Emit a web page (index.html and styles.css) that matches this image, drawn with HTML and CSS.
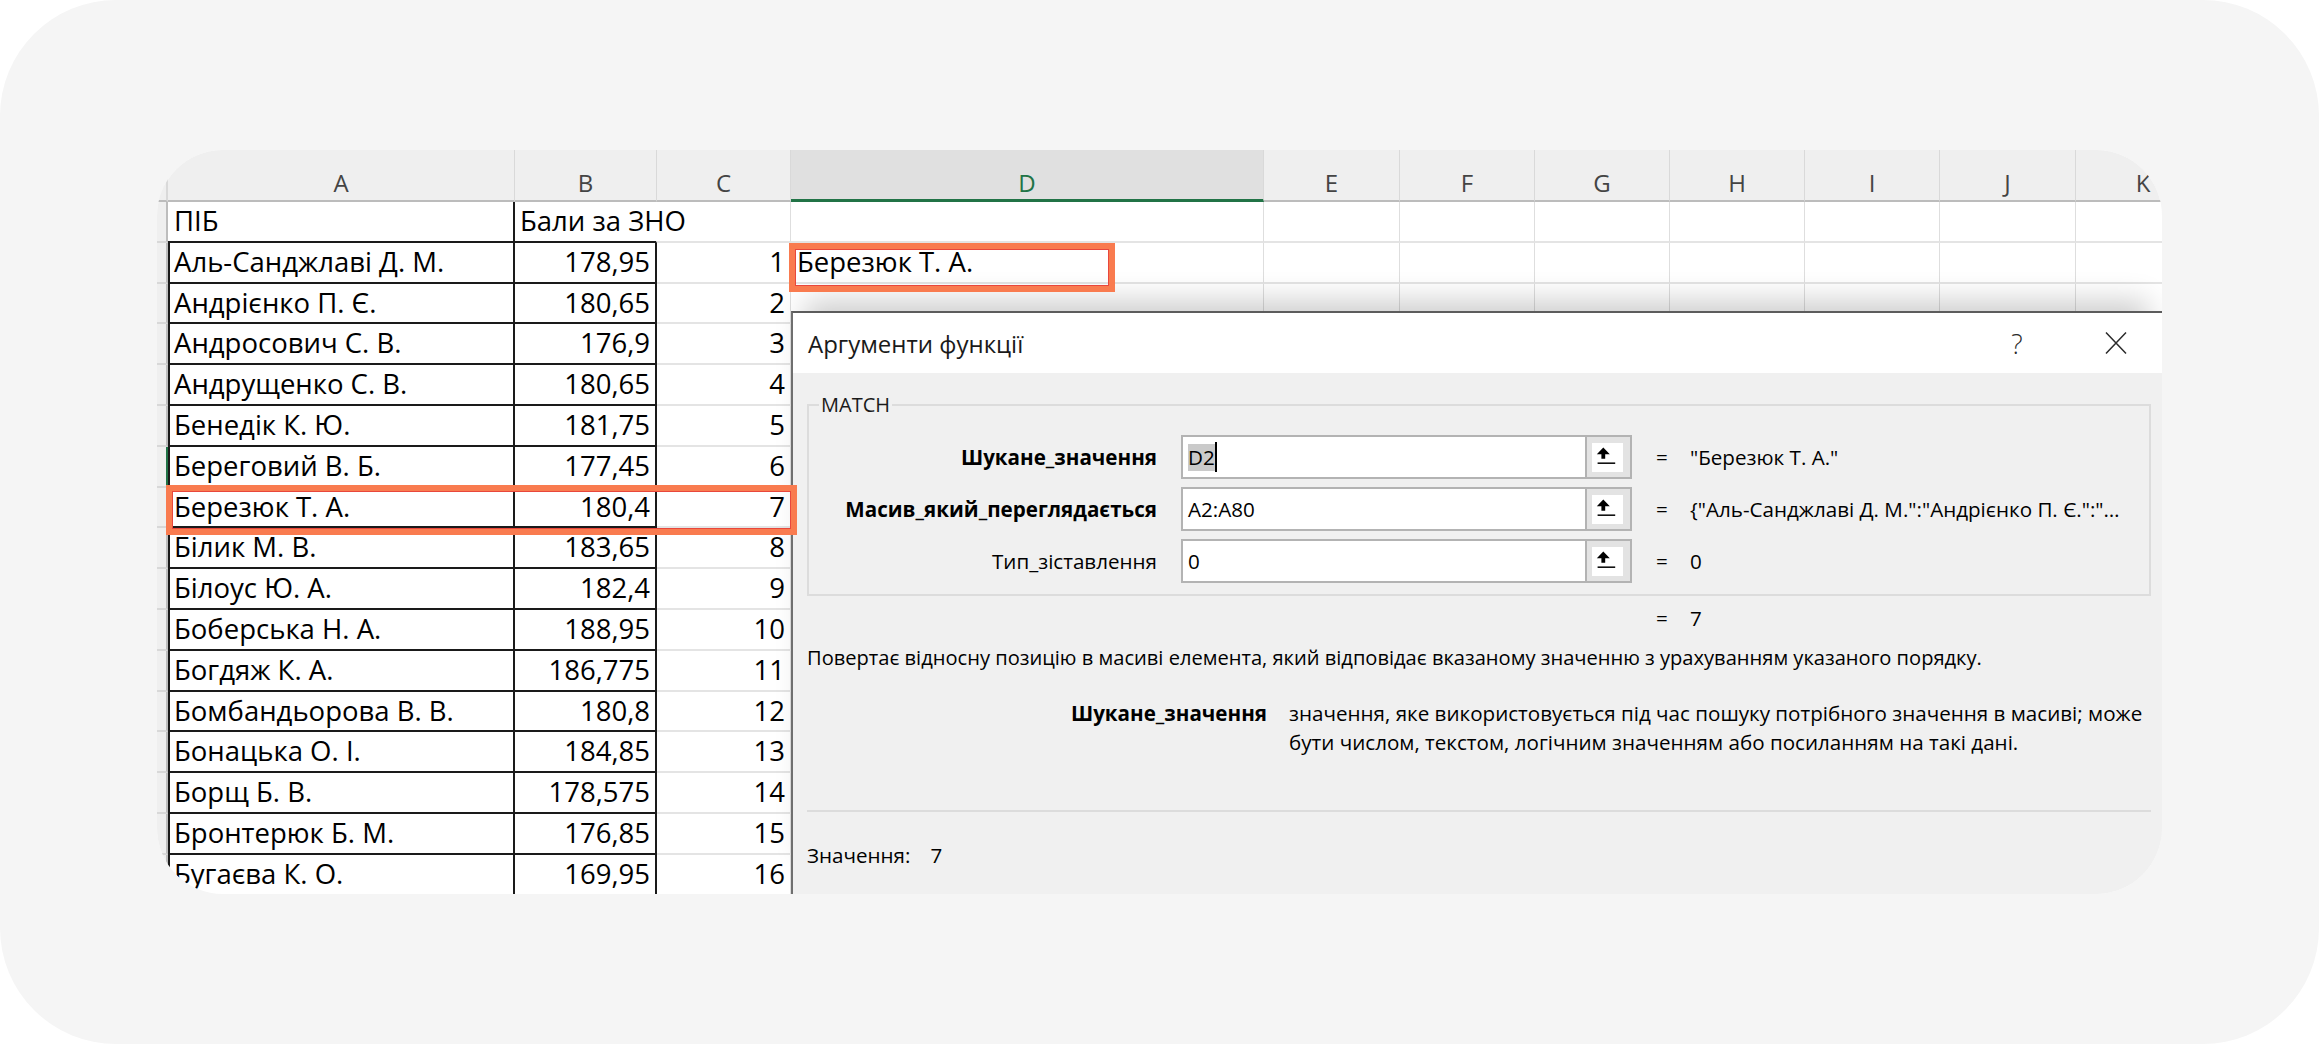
FILE: index.html
```html
<!DOCTYPE html>
<html lang="uk">
<head>
<meta charset="utf-8">
<title>MATCH — Аргументи функції</title>
<link rel="stylesheet" href="styles.css">
</head>
<body>
<div class="frame">
  <div class="shot">
    <div class="sheet">
      <div class="row head">
        <span class="rh"></span>
        <span class="ch">A</span><span class="ch">B</span><span class="ch">C</span><span class="ch sel">D</span><span class="ch">E</span><span class="ch">F</span><span class="ch">G</span><span class="ch">H</span><span class="ch">I</span><span class="ch">J</span><span class="ch">K</span>
      </div>
      <div class="row">
        <span class="rh"></span>
        <span class="pa">ПІБ</span><span class="pb">Бали за ЗНО</span><span></span><span></span><span></span><span></span><span></span><span></span><span></span><span></span><span></span>
      </div>
      <div class="row">
        <span class="rh"></span>
        <span class="ka">Аль-Санджлаві Д. М.</span><span class="kb">178,95</span><span class="n">1</span><span class="dv">Березюк Т. А.</span><span></span><span></span><span></span><span></span><span></span><span></span><span></span>
      </div>
      <div class="row">
        <span class="rh"></span>
        <span class="ka">Андрієнко П. Є.</span><span class="kb">180,65</span><span class="n">2</span><span></span><span></span><span></span><span></span><span></span><span></span><span></span><span></span>
      </div>
      <div class="row"><span class="rh"></span><span class="ka">Андросович С. В.</span><span class="kb">176,9</span><span class="n">3</span></div>
      <div class="row"><span class="rh"></span><span class="ka">Андрущенко С. В.</span><span class="kb">180,65</span><span class="n">4</span></div>
      <div class="row"><span class="rh"></span><span class="ka">Бенедік К. Ю.</span><span class="kb">181,75</span><span class="n">5</span></div>
      <div class="row"><span class="rh on"></span><span class="ka">Береговий В. Б.</span><span class="kb">177,45</span><span class="n">6</span></div>
      <div class="row"><span class="rh"></span><span class="ka">Березюк Т. А.</span><span class="kb">180,4</span><span class="n">7</span></div>
      <div class="row"><span class="rh"></span><span class="ka">Білик М. В.</span><span class="kb">183,65</span><span class="n">8</span></div>
      <div class="row"><span class="rh"></span><span class="ka">Білоус Ю. А.</span><span class="kb">182,4</span><span class="n">9</span></div>
      <div class="row"><span class="rh"></span><span class="ka">Боберська Н. А.</span><span class="kb">188,95</span><span class="n">10</span></div>
      <div class="row"><span class="rh"></span><span class="ka">Богдяж К. А.</span><span class="kb">186,775</span><span class="n">11</span></div>
      <div class="row"><span class="rh"></span><span class="ka">Бомбандьорова В. В.</span><span class="kb">180,8</span><span class="n">12</span></div>
      <div class="row"><span class="rh"></span><span class="ka">Бонацька О. І.</span><span class="kb">184,85</span><span class="n">13</span></div>
      <div class="row"><span class="rh"></span><span class="ka">Борщ Б. В.</span><span class="kb">178,575</span><span class="n">14</span></div>
      <div class="row"><span class="rh"></span><span class="ka">Бронтерюк Б. М.</span><span class="kb">176,85</span><span class="n">15</span></div>
      <div class="row"><span class="rh"></span><span class="ka">Бугаєва К. О.</span><span class="kb">169,95</span><span class="n">16</span></div>
    </div>

    <div class="dialog">
      <div class="titlebar">
        <div class="title">Аргументи функції</div>
        <div class="help">?</div>
        <div class="close">
          <svg width="24" height="24" viewBox="0 0 24 24"><path d="M2 1.5 L22 22.5 M22 1.5 L2 22.5" stroke="#2b2b2b" stroke-width="1.5" fill="none"/></svg>
        </div>
      </div>
      <div class="dbody">
        <fieldset class="group">
          <legend>MATCH</legend>
          <div class="args">
            <div class="lbl b">Шукане_значення</div>
            <div class="inp"><div class="t"><span class="selt">D2</span><span class="caret"></span></div><div class="ref"><div class="sq"><svg width="31" height="29" viewBox="0 0 31 29"><path d="M11.3 4.5 L17.8 11.2 L13.2 11.2 L13.2 15.8 L9.4 15.8 L9.4 11.2 L4.8 11.2 Z" fill="#000"/><rect x="5.6" y="19.4" width="17.6" height="1.6" fill="#111"/></svg></div></div></div>
            <div class="eq">=</div>
            <div class="val">"Березюк Т. А."</div>

            <div class="lbl b">Масив_який_переглядається</div>
            <div class="inp"><div class="t">A2:A80</div><div class="ref"><div class="sq"><svg width="31" height="29" viewBox="0 0 31 29"><path d="M11.3 4.5 L17.8 11.2 L13.2 11.2 L13.2 15.8 L9.4 15.8 L9.4 11.2 L4.8 11.2 Z" fill="#000"/><rect x="5.6" y="19.4" width="17.6" height="1.6" fill="#111"/></svg></div></div></div>
            <div class="eq">=</div>
            <div class="val">{"Аль-Санджлаві Д. М.":"Андрієнко П. Є.":"…</div>

            <div class="lbl">Тип_зіставлення</div>
            <div class="inp"><div class="t">0</div><div class="ref"><div class="sq"><svg width="31" height="29" viewBox="0 0 31 29"><path d="M11.3 4.5 L17.8 11.2 L13.2 11.2 L13.2 15.8 L9.4 15.8 L9.4 11.2 L4.8 11.2 Z" fill="#000"/><rect x="5.6" y="19.4" width="17.6" height="1.6" fill="#111"/></svg></div></div></div>
            <div class="eq">=</div>
            <div class="val">0</div>
          </div>
        </fieldset>

        <div class="result"><span></span><span class="eq">=</span><span>7</span></div>
        <p class="desc">Повертає відносну позицію в масиві елемента, який відповідає вказаному значенню з урахуванням указаного порядку.</p>
        <div class="arghelp">
          <div class="lbl b">Шукане_значення</div>
          <div class="htext">значення, яке використовується під час пошуку потрібного значення в масиві; може<br>бути числом, текстом, логічним значенням або посиланням на такі дані.</div>
        </div>
        <div class="sep"></div>
        <div class="value">Значення:<span class="v">7</span></div>
      </div>
    </div>

    <div class="mark m1"></div>
    <div class="mark m2"></div>
  </div>
</div>
</body>
</html>
```

FILE: styles.css
```css
* { box-sizing: border-box; }

body {
  margin: 0;
  background: #ffffff;
  font-family: "Open Sans", "Noto Sans", sans-serif;
  color: #000;
}

.frame {
  width: 2319px;
  height: 1044px;
  border-radius: 116px;
  background: #f5f5f5;
  padding: 150px 0 0 157px;
}

.shot {
  position: relative;
  width: 2005px;
  height: 744px;
  border-radius: 66px;
  overflow: hidden;
  background: #ffffff;
}

/* ---------- spreadsheet ---------- */
.sheet {
  display: flex;
  flex-direction: column;
}

.row {
  display: grid;
  grid-template-columns: 11px 347px 142px 134px 473px 136px 135px 135px 135px 135px 136px 135px;
  height: 40.8px;
  flex: none;
}

.row > span {
  border-right: 1px solid #dedede;
  border-bottom: 2px solid #e4e4e4;
  white-space: nowrap;
  overflow: hidden;
  font-size: 27.5px;
  line-height: 38px;
  padding: 0 5px;
  color: #000;
}

.row > .rh {
  background: #efefef;
  border-right: 2px solid #bdbdbd;
  border-bottom-color: #d8d8d8;
  padding: 0;
}

.row > .rh.on {
  border-right-color: #217346;
}

.row.head {
  height: 52px;
  background: #efefef;
}

.row.head > span {
  border-bottom: 2px solid #bcbcbc;
  border-right-color: #d9d9d9;
}

.row.head > .ch {
  color: #444;
  font-size: 24px;
  line-height: 32px;
  padding-top: 17px;
  text-align: center;
}

.row.head > .sel {
  background: #e0e0e0;
  border-bottom: 3px solid #217346;
  color: #217346;
}

.row > .pa {
  border-right: 2px solid #1a1a1a;
  border-bottom: 2px solid #1a1a1a;
  padding-left: 6px;
}

.row > .pb {
  border-right-color: transparent;
  border-bottom: 2px solid #1a1a1a;
  overflow: visible;
}

.row > .ka {
  border-left: 2px solid #1a1a1a;
  border-right: 2px solid #1a1a1a;
  border-bottom: 2px solid #1a1a1a;
  padding-left: 4px;
}

.row > .kb {
  border-right: 2px solid #1a1a1a;
  border-bottom: 2px solid #1a1a1a;
  text-align: right;
  padding-right: 5px;
}

.row > .n {
  text-align: right;
  padding-right: 5px;
}

.row > .dv {
  padding-left: 6px;
}

/* ---------- dialog ---------- */
.dialog {
  position: absolute;
  left: 634px;
  top: 161px;
  right: 0;
  bottom: 0;
  background: #f0f0f0;
  border-left: 2px solid #6f6f6f;
  border-top: 2px solid #5c5c5c;
  box-shadow: 0 -24px 28px -14px rgba(0, 0, 0, 0.2);
  font-size: 20.6px;
  color: #000;
  display: flex;
  flex-direction: column;
}

.titlebar {
  flex: none;
  height: 60px;
  background: #ffffff;
  display: flex;
  align-items: center;
  padding-left: 15px;
}

.title {
  flex: 1;
  font-size: 24px;
  color: #1a1a1a;
}

.help {
  width: 40px;
  text-align: center;
  font-size: 27px;
  font-weight: 300;
  color: #2b2b2b;
}

.close {
  width: 40px;
  margin: 0 26px 0 59px;
  display: flex;
  justify-content: center;
}

.dbody {
  padding: 0 11px 0 14px;
}

.group {
  margin: 20px 0 0;
  padding: 18px 0 11px;
  border: 2px solid #dcdcdc;
  min-width: 0;
}

.group legend {
  margin-left: 10px;
  padding: 0 2px;
  font-size: 20px;
  line-height: 24px;
  color: #1a1a1a;
}

.args {
  display: grid;
  grid-template-columns: 348px 451px 10px 1fr;
  grid-auto-rows: 44px;
  column-gap: 24px;
  row-gap: 8px;
  align-items: center;
}

.lbl {
  text-align: right;
  white-space: nowrap;
}

.lbl.b {
  font-weight: 700;
}

.inp {
  height: 44px;
  display: flex;
  border: 2px solid #b3b3b3;
  background: #ffffff;
}

.inp .t {
  flex: 1;
  padding-left: 5px;
  line-height: 40px;
  white-space: nowrap;
  display: flex;
  align-items: center;
}

.selt {
  background: #cacaca;
  line-height: 27px;
}

.caret {
  width: 2px;
  height: 30px;
  background: #000;
}

.ref {
  flex: none;
  width: 45px;
  border-left: 2px solid #b3b3b3;
  background: #e3e3e3;
  padding: 6px 7px 5px 5px;
}

.sq {
  width: 31px;
  height: 29px;
  background: #ffffff;
}

.sq svg {
  display: block;
}

.eq {
  text-align: center;
}

.val {
  white-space: nowrap;
}

.result {
  display: grid;
  grid-template-columns: 825px 10px 1fr;
  column-gap: 24px;
  margin-top: 7px;
  line-height: 30px;
}

.desc {
  margin: 10px 0 0;
  font-size: 20.1px;
  line-height: 30px;
  white-space: nowrap;
}

.arghelp {
  display: grid;
  grid-template-columns: 460px 1fr;
  column-gap: 22px;
  margin-top: 26px;
  line-height: 29px;
}

.htext {
  white-space: nowrap;
}

.sep {
  margin-top: 53px;
  border-top: 2px solid #dcdcdc;
}

.value {
  margin-top: 28px;
  line-height: 30px;
}

.value .v {
  margin-left: 20px;
}

/* ---------- highlight frames ---------- */
.mark {
  position: absolute;
  border: 6px solid #f97b4f;
  box-shadow: inset 0 0 0 1px #e8473c;
}

.m1 {
  left: 9px;
  top: 335px;
  width: 631px;
  height: 50px;
}

.m2 {
  left: 632px;
  top: 93px;
  width: 326px;
  height: 49px;
}
```
